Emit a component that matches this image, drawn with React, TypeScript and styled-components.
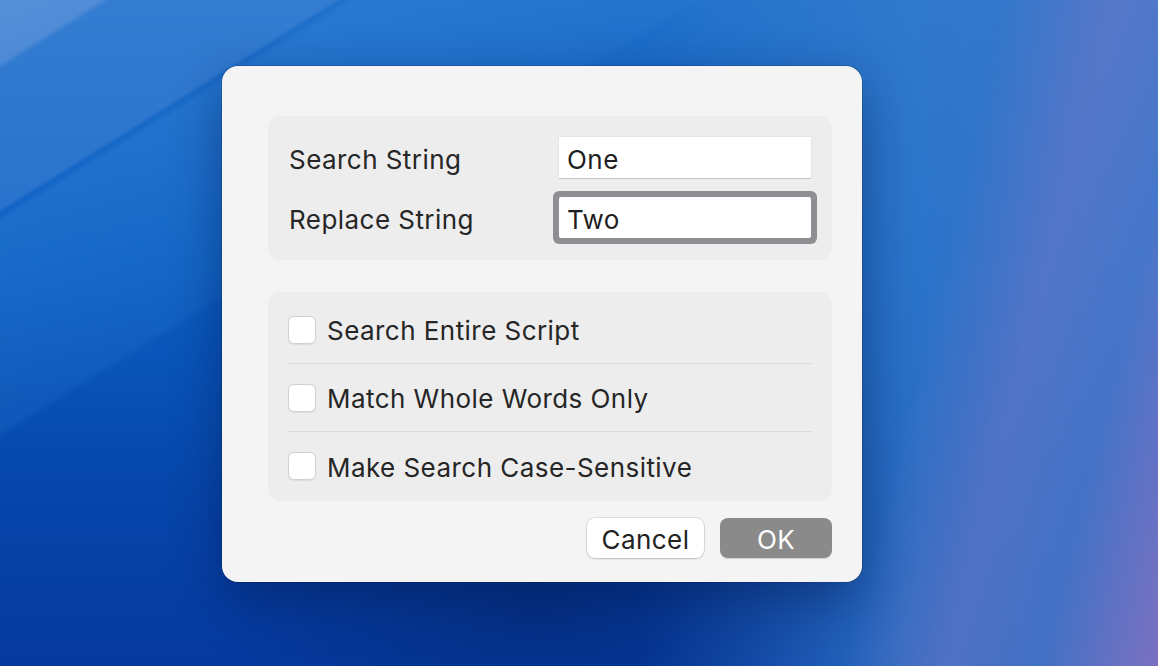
import styled, { createGlobalStyle } from 'styled-components'

const GlobalStyle = createGlobalStyle`
  html, body {
    margin: 0;
    padding: 0;
    width: 100%;
    height: 100%;
    overflow: hidden;
  }
  body {
    font-family: Inter, 'Noto Sans', 'Liberation Sans', sans-serif;
  }
`

const Desktop = styled.div`
  width: 1158px;
  height: 666px;
  box-sizing: border-box;
  padding: 66px 0 0 222px;
  background:
    radial-gradient(ellipse 440px 200px at 540px 610px, rgba(2, 28, 90, 0.4), transparent 70%),
    linear-gradient(148deg, rgba(140, 175, 230, 0.5) 0%, rgba(140, 175, 230, 0.45) 4.5%, rgba(100, 155, 225, 0.3) 5%, rgba(100, 155, 225, 0.3) 15%, transparent 15.4%),
    linear-gradient(148deg, transparent 15.4%, rgba(60, 140, 220, 0.3) 16%, rgba(50, 130, 215, 0.18) 31%, transparent 31.6%),
    linear-gradient(104deg, transparent 76%, rgba(110, 120, 200, 0.55) 84%, rgba(90, 125, 205, 0.45) 91%, rgba(135, 115, 195, 0.85) 100%),
    linear-gradient(to right, transparent 55%, rgba(55, 125, 205, 0.7) 78%, rgba(70, 120, 200, 0.7) 100%),
    linear-gradient(to bottom, #1f70cb 0%, #0b5ec2 40%, #0645aa 75%, #06399e 100%);
`

const Wallpaper = styled.div`
  width: 100%;
  height: 100%;
  display: flex;
  flex-direction: column;
  align-items: flex-start;
`

const Dialog = styled.div`
  width: 640px;
  height: 516px;
  box-sizing: border-box;
  padding: 50px 30px 23px 46px;
  background: #f4f4f4;
  border-radius: 16px;
  box-shadow: 0 18px 50px rgba(0, 20, 70, 0.45), 0 0 0 0.5px rgba(0, 0, 0, 0.25);
  display: flex;
  flex-direction: column;
`

const Group = styled.div<{ $gap?: number }>`
  background: #ededed;
  border-radius: 12px;
  margin-bottom: ${(p) => p.$gap ?? 0}px;
`

const FieldGroup = styled(Group)`
  display: grid;
  grid-template-columns: 1fr 252px;
  row-gap: 19px;
  padding: 21px 21px 22px 21px;
  align-items: center;
`

const Label = styled.div`
  font-size: 26px;
  color: #262626;
  letter-spacing: 0.45px;
  padding-top: 3px;
`

const Field = styled.div<{ $focused?: boolean }>`
  height: 41px;
  box-sizing: border-box;
  background: #ffffff;
  padding: 3px 8px 0;
  display: flex;
  align-items: center;
  font-size: 26px;
  letter-spacing: 0.45px;
  color: #1e1e1e;
  box-shadow: ${(p) =>
    p.$focused
      ? '0 0 0 6px #8f8f93'
      : '0 1px 0 #c4c4c4, 0 0 0 0.5px #dcdcdc'};
  border-radius: ${(p) => (p.$focused ? '2px' : '0')};
`

const OptionGroup = styled(Group)`
  padding: 4px 20px 1px 20px;
  display: flex;
  flex-direction: column;
`

const Option = styled.label<{ $last?: boolean }>`
  height: 68px;
  display: flex;
  align-items: center;
  gap: 11px;
  font-size: 26px;
  letter-spacing: 0.45px;
  color: #262626;
  border-bottom: ${(p) => (p.$last ? 'none' : '1.5px solid #dcdcdc')};
  box-sizing: border-box;
`

const Checkbox = styled.span`
  width: 28px;
  height: 28px;
  box-sizing: border-box;
  border-radius: 6px;
  background: #ffffff;
  border: 1px solid #d2d2d2;
  box-shadow: 0 0.5px 1px rgba(0, 0, 0, 0.08);
  flex: none;
`

const OptionText = styled.span`
  padding-top: 2px;
`

const Buttons = styled.div`
  margin-top: 17px;
  display: flex;
  justify-content: flex-end;
  gap: 16px;
`

const Button = styled.button<{ $primary?: boolean; $width: number }>`
  width: ${(p) => p.$width}px;
  height: 40px;
  border: none;
  border-radius: 8px;
  font-family: inherit;
  font-size: 26px;
  letter-spacing: 0.45px;
  padding: 2px 0 0;
  color: ${(p) => (p.$primary ? '#ffffff' : '#222222')};
  background: ${(p) => (p.$primary ? '#8a8a8a' : '#ffffff')};
  box-shadow: ${(p) =>
    p.$primary
      ? '0 1px 1px rgba(0, 0, 0, 0.15)'
      : '0 0 0 0.5px rgba(0, 0, 0, 0.18), 0 1px 2px rgba(0, 0, 0, 0.15)'};
`

const options = ['Search Entire Script', 'Match Whole Words Only', 'Make Search Case-Sensitive']

export default function App() {
  return (
    <>
      <GlobalStyle />
      <Desktop>
        <Wallpaper>
          <Dialog>
            <FieldGroup $gap={32}>
              <Label>Search String</Label>
              <Field>One</Field>
              <Label>Replace String</Label>
              <Field $focused>Two</Field>
            </FieldGroup>
            <OptionGroup>
              {options.map((o, i) => (
                <Option key={o} $last={i === options.length - 1}>
                  <Checkbox />
                  <OptionText>{o}</OptionText>
                </Option>
              ))}
            </OptionGroup>
            <Buttons>
              <Button $width={117}>Cancel</Button>
              <Button $primary $width={112}>OK</Button>
            </Buttons>
          </Dialog>
        </Wallpaper>
      </Desktop>
    </>
  )
}
